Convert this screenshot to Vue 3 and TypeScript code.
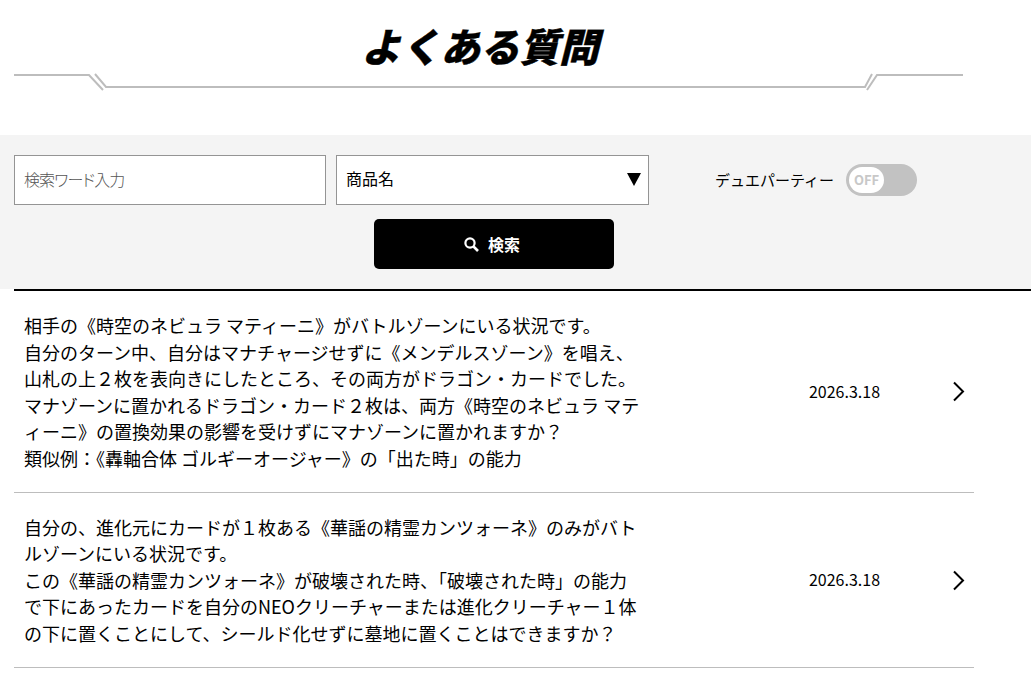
<script setup lang="ts">
interface Faq { lines: string[]; date: string }
const faqs: Faq[] = [
  {
    lines: [
      '相手の《時空のネビュラ マティーニ》がバトルゾーンにいる状況です。',
      '自分のターン中、自分はマナチャージせずに《メンデルスゾーン》を唱え、',
      '山札の上２枚を表向きにしたところ、その両方がドラゴン・カードでした。',
      'マナゾーンに置かれるドラゴン・カード２枚は、両方《時空のネビュラ マティーニ》の置換効果の影響を受けずにマナゾーンに置かれますか？',
      '類似例：《轟軸合体 ゴルギーオージャー》の「出た時」の能力',
    ],
    date: '2026.3.18',
  },
  {
    lines: [
      '自分の、進化元にカードが１枚ある《華謡の精霊カンツォーネ》のみがバトルゾーンにいる状況です。',
      'この《華謡の精霊カンツォーネ》が破壊された時、「破壊された時」の能力で下にあったカードを自分のNEOクリーチャーまたは進化クリーチャー１体の下に置くことにして、シールド化せずに墓地に置くことはできますか？',
    ],
    date: '2026.3.18',
  },
]
</script>

<template>
  <div class="page">
    <header class="head">
      <h1 class="title">よくある質問</h1>
      <svg class="rule" width="950" height="20" viewBox="0 0 950 20" fill="none" stroke="#bdbdbd" stroke-width="2">
        <path d="M0 3H75L89 18" />
        <path d="M81 2L92 15H851L858 2" />
        <path d="M853 18L863 3H949" />
      </svg>
    </header>

    <section class="search">
      <div class="fields">
        <input class="word" type="text" placeholder="検索ワード入力" />
        <div class="select"><span>商品名</span><i class="arrow"></i></div>
        <div class="party">
          <span>デュエパーティー</span>
          <div class="toggle"><div class="knob">OFF</div></div>
        </div>
      </div>
      <button class="go" type="button">
        <svg width="15" height="15" viewBox="0 0 15 15" fill="none" stroke="#fff">
          <circle cx="6" cy="6" r="4.600" stroke-width="2.200" />
          <path d="M9.500 9.500L14 14" stroke-width="2.600" />
        </svg>
        <span>検索</span>
      </button>
    </section>

    <ul class="list">
      <li v-for="(faq, i) in faqs" :key="i" class="row">
        <div class="q"><div v-for="(line, j) in faq.lines" :key="j">{{ line }}</div></div>
        <div class="date">{{ faq.date }}</div>
        <svg class="chev" width="14" height="21" viewBox="0 0 14 21" fill="none" stroke="#000" stroke-width="2">
          <path d="M2 1.500L11 10.500L2 19.500" />
        </svg>
      </li>
    </ul>
  </div>
</template>

<style>
html, body { margin: 0; background: #fff; overflow: hidden; }
</style>

<style scoped>
.page {
  width: 1031px;
  height: 682px;
  overflow: hidden;
  font-family: "Noto Sans CJK JP", "Noto Sans", sans-serif;
  color: #000;
}
.head { height: 135px; padding: 0 0 0 14px; box-sizing: border-box; display: flex; flex-direction: column; }
.title {
  margin: 0;
  height: 72px;
  width: 932px;
  padding-top: 16px;
  box-sizing: border-box;
  font-size: 39.500px;
  line-height: 58px;
  font-weight: 900;
  font-style: italic;
  text-align: center;
  -webkit-text-stroke: 0.4px #000;
}
.rule { display: block; }
.search {
  height: 154px;
  background: #f4f4f4;
  box-sizing: border-box;
  padding: 20px 0 0 14px;
  display: flex;
  flex-direction: column;
}
.fields { display: flex; align-items: center; }
.word, .select {
  width: 312px;
  height: 50px;
  box-sizing: border-box;
  border: 1px solid #949494;
  background: #fff;
  padding: 0 9px 3px;
  font-family: inherit;
  font-size: 16px;
  border-radius: 0;
  outline: none;
}
.word { font-feature-settings: "palt"; letter-spacing: -0.900px; }
.word::placeholder { color: #555; font-weight: 300; opacity: 1; }
.select { width: 313px; margin-left: 10px; display: flex; align-items: center; justify-content: space-between; padding-right: 7px; padding-bottom: 4px; }
.arrow {
  width: 0; height: 0;
  margin-top: 3px;
  border-left: 7px solid transparent;
  border-right: 7px solid transparent;
  border-top: 13px solid #000;
}
.party { display: flex; align-items: center; margin-left: 66px; font-size: 15px; gap: 12px; }
.party span { padding-bottom: 1px; }
.toggle {
  width: 71px; height: 32px;
  border-radius: 16px;
  background: #c2c2c2;
  box-sizing: border-box;
  padding: 3px;
}
.knob {
  width: 35px; height: 26px;
  border-radius: 13px;
  background: #fff;
  color: #c8c8c8;
  font-size: 13px;
  font-weight: 700;
  text-align: center;
  line-height: 26px;
}
.go {
  width: 240px; height: 50px;
  margin: 14px 0 0 360px;
  padding: 0 4px 0 0;
  border: 0;
  border-radius: 5px;
  background: #000;
  color: #fff;
  font-family: inherit;
  font-size: 16px;
  font-weight: 700;
  display: flex;
  align-items: center;
  justify-content: center;
  gap: 9px;
}
.list {
  list-style: none;
  margin: 0 0 0 14px;
  padding: 0;
  border-top: 2px solid #000;
}
.row {
  width: 960px;
  box-sizing: border-box;
  border-bottom: 1px solid #bdbdbd;
  padding: 21px 0 20px 10px;
  display: flex;
  align-items: center;
}
.q { width: 620px; flex: none; font-size: 18px; line-height: 26.600px; }
.date { width: 132px; margin-left: 134.500px; padding-bottom: 2px; font-size: 16px; text-align: center; flex: none; }
.chev { margin-left: 41.500px; flex: none; }
</style>
